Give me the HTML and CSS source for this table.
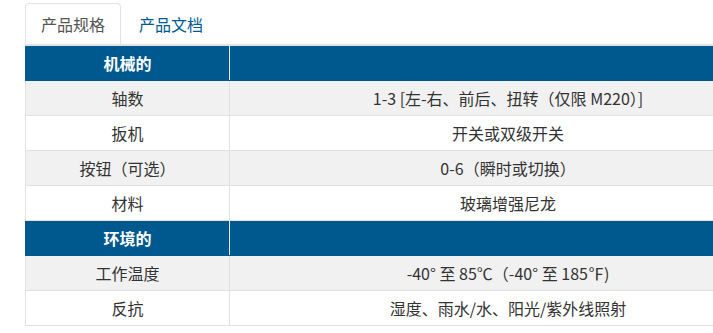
FILE: index.html
```html
<!DOCTYPE html>
<html lang="zh">
<head>
<meta charset="utf-8">
<link rel="stylesheet" href="styles.css">
</head>
<body>
<div class="wrap">
  <ul class="tabs">
    <li class="tab active">产品规格</li>
    <li class="tab">产品文档</li>
  </ul>
  <table class="spec">
    <colgroup><col class="c1"><col class="c2"></colgroup>
    <tr class="head"><th>机械的</th><th></th></tr>
    <tr class="odd"><td>轴数</td><td>1-3 [左-右、前后、扭转（仅限 M220）]</td></tr>
    <tr><td>扳机</td><td>开关或双级开关</td></tr>
    <tr class="odd"><td>按钮（可选）</td><td>0-6（瞬时或切换）</td></tr>
    <tr><td>材料</td><td>玻璃增强尼龙</td></tr>
    <tr class="head"><th>环境的</th><th></th></tr>
    <tr class="odd"><td>工作温度</td><td>-40° 至 85℃（-40° 至 185℉)</td></tr>
    <tr><td>反抗</td><td>湿度、雨水/水、阳光/紫外线照射</td></tr>
  </table>
</div>
</body>
</html>
```

FILE: styles.css
```css
html, body {
  margin: 0;
  padding: 0;
  overflow: hidden;
  background: #fff;
}
body {
  font-family: "Noto Sans CJK SC", "Noto Sans", sans-serif;
  font-size: 16px;
  color: #333;
}
.wrap {
  padding: 3px 0 0 25px;
  width: 762px;
}
.tabs {
  list-style: none;
  margin: 0;
  padding: 0;
  display: flex;
  border-bottom: 2px solid #dfe1e3;
}
.tab {
  height: 40px;
  line-height: 40px;
  padding: 0 15px;
  color: #005a8f;
  border: 1px solid transparent;
  border-bottom: none;
  border-radius: 4px 4px 0 0;
  margin-right: 2px;
}
.tab.active {
  color: #555;
  border-color: #e3e3e3;
  background: #fff;
}
.spec {
  width: 762px;
  border-collapse: collapse;
  table-layout: fixed;
}
.c1 { width: 204px; }
.spec th, .spec td {
  text-align: center;
  height: 34px;
  padding: 0 8px;
  line-height: 18px;
  border: 1px solid #dfe1e3;
  border-top: none;
}
.spec tr.head th {
  background: #00598e;
  color: #fff;
  font-weight: bold;
  height: 34px;
  border-color: #00598e;
  border-right-color: #e6eaee;
}
.spec tr.head th:last-child { border-right-color: #00598e; }
.spec tr.odd td { background: #f1f1f1; }
```
